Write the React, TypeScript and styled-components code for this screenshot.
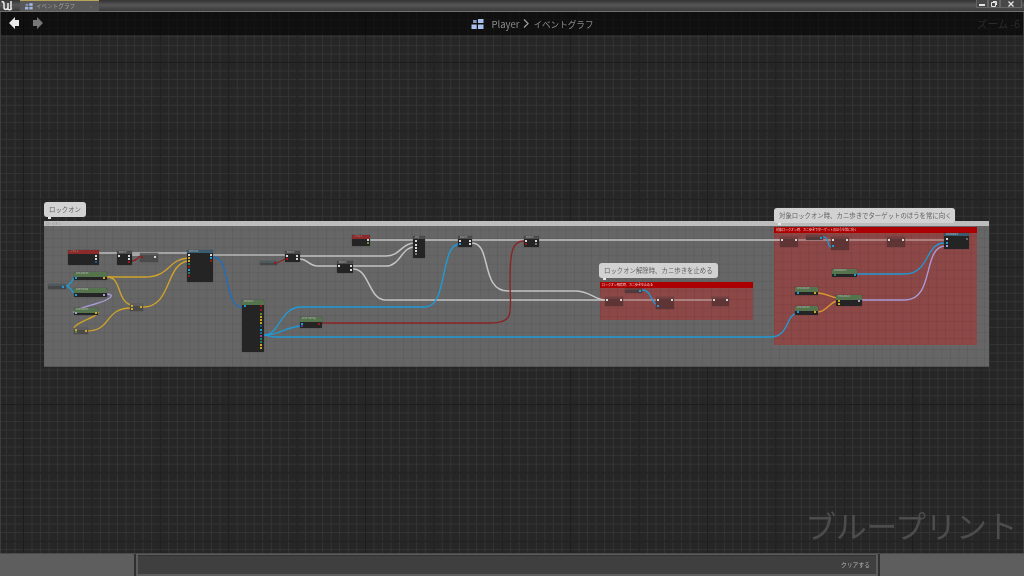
import styled, { createGlobalStyle } from "styled-components";

const GlobalStyle = createGlobalStyle`
  html, body {
    margin: 0;
    padding: 0;
    background: #252525;
    font-family: "Noto Sans CJK JP", "Liberation Sans", sans-serif;
    overflow: hidden;
  }
`;

const Page = styled.div`
  width: 1024px;
  height: 576px;
  display: flex;
  flex-flow: column;
  overflow: hidden;
  filter: blur(0.35px);
`;

const TitleBar = styled.div`
  height: 12px;
  flex: none;
  display: flex;
  align-items: flex-end;
  box-sizing: border-box;
  background: linear-gradient(#333333, #565656 45%, #3a3a3a);
  border-bottom: 1px solid #707070;
`;
const Logo = styled.svg`
  width: 14px;
  height: 11px;
  margin: 0 6px 0 0;
`;
const Tab = styled.div`
  width: 79px;
  height: 11px;
  display: flex;
  align-items: center;
  gap: 3px;
  padding-left: 5px;
  box-sizing: border-box;
  background: #585858;
  border-top: 1px solid #b8a458;
  color: #a0a0a0;
  font-size: 5.6px;
  line-height: 9px;
`;
const TabClose = styled.span`
  margin-left: auto;
  margin-right: 5px;
  color: #6c6c6c;
  font-size: 6px;
`;
const WindowButtons = styled.div`
  margin-left: auto;
  margin-right: 2px;
  height: 8px;
  display: flex;
  align-self: flex-start;
`;
const WindowButton = styled.div<{ $w: number }>`
  width: ${(p) => p.$w}px;
  height: 8px;
  display: flex;
  align-items: center;
  justify-content: center;
  background: #484848;
  border: 1px solid #666666;
  border-top: none;
  box-sizing: border-box;
`;

const Canvas = styled.div`
  flex: 1;
  position: relative;
  overflow: hidden;
  border-left: 1px solid #3c3c3c;
  border-right: 1px solid #3c3c3c;
  background-color: #262626;
  background-image:
    linear-gradient(#1c1c1c 1px, transparent 1px),
    linear-gradient(90deg, #1c1c1c 1px, transparent 1px),
    linear-gradient(#343434 1px, transparent 1px),
    linear-gradient(90deg, #343434 1px, transparent 1px);
  background-size: 68.4px 68.4px, 68.4px 68.4px, 8.55px 8.55px, 8.55px 8.55px;
  background-position: 22px 50px, 22px 50px, 22px 50px, 22px 50px;
`;

const BreadcrumbBar = styled.div`
  position: absolute;
  z-index: 5;
  left: 0;
  right: 0;
  top: 0;
  height: 23px;
  display: flex;
  align-items: center;
  justify-content: center;
  gap: 4px;
  background: rgba(0, 0, 0, 0.6);
  color: #8c8c8c;
  font-size: 9.5px;
  padding-left: 41px;
  box-sizing: border-box;
`;
const NavArrows = styled.div`
  position: absolute;
  left: 8px;
  top: 5px;
  display: flex;
  gap: 12px;
`;
const ZoomLabel = styled.div`
  position: absolute;
  right: 3px;
  top: 4px;
  color: #2c2c2c;
  font-size: 10.5px;
  line-height: 15px;
`;
const GraphIcon = styled.svg`
  width: 13px;
  height: 10px;
  margin-right: 3px;
`;
const Chevron = styled.svg`
  width: 6px;
  height: 9px;
`;
const GraphName = styled.span`
  font-size: 8.6px;
`;
const Watermark = styled.div`
  position: absolute;
  right: 6px;
  bottom: 8px;
  color: #4c4c4c;
  font-size: 31px;
  line-height: 40px;
  letter-spacing: -0.5px;
`;

const Comment = styled.div<{ $x: number; $y: number; $w: number; $h: number; $tone: "gray" | "red" }>`
  position: absolute;
  left: ${(p) => p.$x}px;
  top: ${(p) => p.$y}px;
  width: ${(p) => p.$w}px;
  height: ${(p) => p.$h}px;
  background: ${(p) => (p.$tone === "red" ? "#8c4747" : "#666666")};
  background-image:
    linear-gradient(rgba(0, 0, 0, 0.06) 1px, transparent 1px),
    linear-gradient(90deg, rgba(0, 0, 0, 0.06) 1px, transparent 1px);
  background-size: 8.55px 8.55px;
  ${(p) => p.$tone === "gray" && "box-shadow: inset 0 -1px 0 #555;"}
`;
const CommentHeader = styled.div<{ $tone: "gray" | "red" }>`
  height: ${(p) => (p.$tone === "red" ? 6 : 5)}px;
  padding-left: 2px;
  background: ${(p) => (p.$tone === "red" ? "#ac0000" : "#bdbdbd")};
  color: ${(p) => (p.$tone === "red" ? "#f0d0d0" : "#8a8a8a")};
  font-size: 3px;
  line-height: 6px;
  white-space: nowrap;
  overflow: hidden;
`;

const Bubble = styled.div<{ $x: number; $y: number; $w: number }>`
  position: absolute;
  z-index: 3;
  left: ${(p) => p.$x}px;
  top: ${(p) => p.$y}px;
  width: ${(p) => p.$w}px;
  height: 15px;
  box-sizing: border-box;
  padding-left: 5px;
  background: #d2d2d2;
  border-radius: 3px;
  color: #626262;
  font-size: 6.4px;
  line-height: 15px;
  white-space: nowrap;
  &::after {
    content: "";
    position: absolute;
    left: 4px;
    bottom: -2px;
    width: 3px;
    height: 2px;
    background: #e8e8e8;
  }
`;

const Wires = styled.svg`
  position: absolute;
  z-index: 1;
  left: 0;
  top: 0;
  width: 1024px;
  height: 541px;
`;
const Wire = styled.path<{ $color: string; $w?: number }>`
  fill: none;
  stroke: ${(p) => p.$color};
  stroke-width: ${(p) => p.$w ?? 1.35}px;
`;

type Kind = "black" | "green" | "blue" | "red" | "cyan" | "gray" | "slim" | "rose" | "roseSlim";

const headerColors: Record<Kind, string> = {
  black: "#4c4c4c",
  green: "#55734c",
  blue: "#3e5c78",
  red: "#8a2a2a",
  cyan: "#3a5c70",
  gray: "#5e5e5e",
  slim: "#4c5a60",
  rose: "#6d3f3f",
  roseSlim: "#6d3f3f",
};
const headerHeights: Record<Kind, number> = {
  black: 3,
  green: 5,
  blue: 3,
  red: 4,
  cyan: 3,
  gray: 2,
  slim: 2,
  rose: 2,
  roseSlim: 2,
};
const bodyColors: Record<Kind, string> = {
  black: "#242424",
  green: "#242424",
  blue: "#242424",
  red: "#242424",
  cyan: "#242424",
  gray: "#4b4b4b",
  slim: "#464646",
  rose: "#5f3434",
  roseSlim: "#533a3a",
};

const NodeBox = styled.div<{ $x: number; $y: number; $w: number; $h: number; $kind: Kind }>`
  position: absolute;
  z-index: 2;
  left: ${(p) => p.$x}px;
  top: ${(p) => p.$y}px;
  width: ${(p) => p.$w}px;
  height: ${(p) => p.$h}px;
  background: ${(p) => bodyColors[p.$kind]};
  border-radius: 1px;
  box-shadow: 0 0 1px #222;
  overflow: hidden;
`;
const NodeTitle = styled.div<{ $kind: Kind }>`
  height: ${(p) => headerHeights[p.$kind]}px;
  background: ${(p) => headerColors[p.$kind]};
  color: #b8b8b8;
  font-size: 2.2px;
  line-height: 3px;
  padding-left: 2px;
  white-space: nowrap;
  overflow: hidden;
`;
const Pin = styled.i<{ $x: number; $y: number; $c: string }>`
  position: absolute;
  left: ${(p) => p.$x}px;
  top: ${(p) => p.$y}px;
  width: 2px;
  height: 2px;
  background: ${(p) => p.$c};
`;

const BottomBar = styled.div`
  height: 23px;
  flex: none;
  display: flex;
  background: #5c5c5c;
  border-top: 1px solid #4a4a4a;
  box-sizing: border-box;
`;
const BottomSide = styled.div<{ $w: number }>`
  width: ${(p) => p.$w}px;
  flex: none;
  background: #5e5e5e;
`;
const Divider = styled.div`
  width: 2px;
  flex: none;
  background: #303030;
`;
const ClearPanel = styled.div`
  flex: 1;
  margin: 1px 2px 2px;
  padding-right: 6px;
  border-top: 1px solid #333;
  background: #3f3f3f;
  color: #b4b4b4;
  font-size: 5.8px;
  line-height: 18px;
  text-align: right;
`;

type PinDef = [number, number, string];
interface NodeDef {
  x: number;
  y: number;
  w: number;
  h: number;
  kind: Kind;
  title?: string;
  pins?: PinDef[];
}

const WHITE = "#d8d8d8";
const RED = "#9c1818";
const BLUE = "#1f9ad6";
const GOLD = "#d0a428";
const LAVENDER = "#a89cd4";

// y values are relative to the canvas, which starts 12px down the page
const nodes: NodeDef[] = [
  { x: 68, y: 238, w: 31, h: 15, kind: "red", title: "イベント", pins: [[27, 5, WHITE], [27, 8, WHITE], [27, 11, "#1a5a9a"]] },
  { x: 117, y: 239, w: 15, h: 14, kind: "black", title: "Branch", pins: [[1, 4, WHITE], [11, 4, WHITE], [11, 7, WHITE], [11, 10, RED]] },
  { x: 140, y: 241, w: 18, h: 9, kind: "gray", pins: [[1, 3, RED], [14, 3, WHITE]] },
  { x: 187, y: 238, w: 26, h: 32, kind: "cyan", title: "SetFocus", pins: [[1, 4, WHITE], [1, 7, GOLD], [1, 10, GOLD], [1, 13, "#2a7a6a"], [1, 16, RED], [1, 19, BLUE], [1, 22, "#2a7a6a"], [1, 25, RED], [23, 4, WHITE], [23, 7, BLUE], [23, 10, RED]] },
  { x: 48, y: 272, w: 18, h: 5, kind: "slim", pins: [[14, 2, BLUE]] },
  { x: 74, y: 260, w: 33, h: 8, kind: "green", title: "GetLocation", pins: [[1, 5, BLUE], [29, 5, GOLD]] },
  { x: 74, y: 276, w: 33, h: 9, kind: "green", title: "GetForward", pins: [[1, 6, BLUE], [29, 6, LAVENDER]] },
  { x: 74, y: 296, w: 24, h: 7, kind: "green", title: "GetRotation", pins: [[1, 4, LAVENDER], [21, 4, GOLD]] },
  { x: 130, y: 292, w: 13, h: 7, kind: "gray", pins: [[1, 1, GOLD], [1, 4, GOLD], [10, 2, GOLD]] },
  { x: 74, y: 316, w: 14, h: 6, kind: "gray", pins: [[1, 1, GOLD], [1, 3, "#5a8a30"], [11, 2, GOLD]] },
  {
    x: 242, y: 288, w: 22, h: 52, kind: "green", title: "Break Hit",
    pins: [[2, 5, BLUE], [18, 5, RED], [18, 9, RED], [18, 13, "#5a8a30"], [18, 16, GOLD], [18, 19, GOLD], [18, 22, GOLD], [18, 25, "#1a5a7a"], [18, 29, BLUE], [18, 32, "#1a6a8a"], [18, 35, "#a040a0"], [18, 38, "#1a8060"], [18, 41, "#1a8060"], [18, 44, GOLD], [18, 47, GOLD]],
  },
  { x: 260, y: 249, w: 17, h: 4, kind: "slim", pins: [[14, 1, RED]] },
  { x: 285, y: 239, w: 15, h: 11, kind: "black", title: "Branch", pins: [[1, 4, WHITE], [1, 7, RED], [11, 4, WHITE], [11, 7, WHITE]] },
  { x: 352, y: 223, w: 18, h: 11, kind: "red", title: "イベント", pins: [[15, 4, WHITE], [15, 7, "#5a9a30"]] },
  { x: 337, y: 249, w: 16, h: 12, kind: "black", title: "Branch", pins: [[1, 4, WHITE], [13, 4, WHITE], [13, 8, WHITE]] },
  { x: 413, y: 224, w: 12, h: 22, kind: "black", title: "Seq", pins: [[2, 4, WHITE], [2, 8, WHITE], [2, 11, WHITE], [2, 14, WHITE], [2, 17, "#777"]] },
  { x: 458, y: 224, w: 14, h: 11, kind: "black", title: "Branch", pins: [[1, 4, WHITE], [1, 7, BLUE], [11, 4, WHITE], [11, 7, WHITE]] },
  { x: 524, y: 224, w: 15, h: 11, kind: "black", title: "Branch", pins: [[1, 4, WHITE], [1, 7, RED], [11, 4, WHITE], [11, 7, "#777"]] },
  { x: 300, y: 305, w: 22, h: 11, kind: "green", title: "Actor Has Tag", pins: [[1, 6, BLUE], [1, 8, "#4a3a9a"], [18, 6, RED]] },
  { x: 605, y: 285, w: 18, h: 9, kind: "rose", pins: [[1, 2, WHITE], [15, 2, WHITE]] },
  { x: 625, y: 276, w: 17, h: 5, kind: "roseSlim", pins: [[14, 2, BLUE]] },
  { x: 656, y: 285, w: 18, h: 12, kind: "rose", pins: [[1, 2, WHITE], [1, 8, BLUE], [15, 2, WHITE]] },
  { x: 712, y: 285, w: 17, h: 9, kind: "rose", pins: [[1, 2, WHITE], [14, 2, WHITE]] },
  { x: 780, y: 225, w: 18, h: 10, kind: "rose", pins: [[1, 2, WHITE], [15, 2, WHITE]] },
  { x: 806, y: 223, w: 17, h: 5, kind: "roseSlim", pins: [[14, 2, BLUE]] },
  { x: 831, y: 225, w: 18, h: 13, kind: "rose", pins: [[1, 2, WHITE], [1, 8, BLUE], [15, 2, WHITE]] },
  { x: 887, y: 225, w: 18, h: 10, kind: "rose", pins: [[1, 2, WHITE], [15, 2, WHITE]] },
  { x: 944, y: 221, w: 25, h: 16, kind: "cyan", title: "SetRotation", pins: [[2, 5, WHITE], [2, 9, BLUE], [2, 12, LAVENDER], [22, 5, "#666"]] },
  { x: 832, y: 257, w: 25, h: 8, kind: "green", title: "GetRotation", pins: [[2, 5, "#1a8060"], [22, 5, BLUE]] },
  { x: 795, y: 275, w: 23, h: 8, kind: "green", title: "GetLocation", pins: [[2, 5, BLUE], [19, 5, GOLD]] },
  { x: 795, y: 294, w: 23, h: 9, kind: "green", title: "GetLocation", pins: [[2, 5, BLUE], [19, 5, GOLD]] },
  { x: 836, y: 283, w: 26, h: 11, kind: "green", title: "FindLookAt", pins: [[2, 5, GOLD], [2, 8, GOLD], [22, 5, LAVENDER]] },
];

const wires: { d: string; c: string; w?: number }[] = [
  // main exec lines
  { d: "M99 241 H117", c: "#b8b8b8", w: 1.6 },
  { d: "M132 243 H140", c: "#b8b8b8", w: 1.6 },
  { d: "M132 241 H187", c: "#b8b8b8", w: 1.6 },
  { d: "M213 243 H285", c: "#b8b8b8", w: 1.6 },
  { d: "M300 244 H386 C400 244 402 231 414 231", c: "#c4c4c4", w: 1.5 },
  { d: "M300 247 C308 247 308 254 318 254 H386 C400 254 402 235 414 235", c: "#c4c4c4", w: 1.5 },
  { d: "M353 257 C370 257 368 288 386 288 H605", c: "#c4c4c4", w: 1.5 },
  { d: "M370 228 H413", c: "#c4c4c4", w: 1.5 },
  { d: "M425 228 H458", c: "#c4c4c4", w: 1.5 },
  { d: "M472 228 H524", c: "#c4c4c4", w: 1.5 },
  { d: "M539 228 H780", c: "#c4c4c4", w: 1.5 },
  { d: "M472 231 C492 231 480 279 508 279 H575 C590 279 595 288 605 288", c: "#c4c4c4", w: 1.5 },
  { d: "M623 288 H656", c: "#d0bcbc", w: 1 },
  { d: "M674 288 H712", c: "#d0bcbc", w: 1 },
  { d: "M798 228 H831", c: "#d0bcbc", w: 1 },
  { d: "M849 228 H887", c: "#d0bcbc", w: 1 },
  { d: "M905 228 H944", c: "#d0bcbc", w: 1 },
  // red
  { d: "M132 249 C136 249 138 246 140 244", c: "#8e2020" },
  { d: "M277 251 L285 247", c: "#8e2020" },
  { d: "M322 311 H490 C516 311 510 300 510 270 C510 240 512 229 524 229", c: "#8a2424" },
  // dark blue
  { d: "M213 245 C232 245 222 296 244 296", c: "#1f6ec0", w: 1.4 },
  // blue from break hit
  { d: "M264 323 C280 323 280 295 301 295 H425 C448 295 440 233 459 232", c: BLUE },
  { d: "M264 323 C280 323 285 315 301 314", c: BLUE },
  { d: "M264 323 C268 323 270 325 275 325 H770 C790 325 786 302 796 302", c: BLUE },
  { d: "M66 274 C70 274 72 268 75 265", c: BLUE },
  { d: "M66 274 C70 274 72 280 75 282", c: BLUE },
  { d: "M642 278 C652 278 650 290 657 293", c: BLUE },
  { d: "M823 225 C830 225 826 234 832 236", c: BLUE },
  { d: "M857 262 H905 C930 262 925 230 945 231", c: BLUE, w: 1.4 },
  // gold
  { d: "M107 265 H145 C170 265 168 247 188 246", c: GOLD },
  { d: "M107 265 C122 265 116 288 131 293 H143", c: GOLD },
  { d: "M143 295 C172 295 165 252 188 249", c: GOLD },
  { d: "M98 300 C100 304 76 310 74 316", c: GOLD },
  { d: "M87 319 C112 319 104 296 131 296", c: GOLD },
  { d: "M818 281 C826 281 830 285 837 286", c: "#d89a30" },
  { d: "M818 300 C826 300 830 290 837 289", c: "#d89a30" },
  // lavender
  { d: "M107 282 C118 283 106 289 95 292 C84 295 69 300 75 301", c: LAVENDER },
  { d: "M862 288 H905 C935 288 922 235 945 234", c: LAVENDER, w: 1.4 },
];

const App = () => {
  return (
    <Page>
      <GlobalStyle />
      <TitleBar>
        <Logo viewBox="0 0 14 11">
          <path
            d="M1.5 1.5 C3.5 1.5 4 2.5 4 4 V7.5 C4 10 7.5 10 8 7.5 V3 M8 7.5 V8.5 C8 10 10 10.5 12 8.5 M11 1 V9"
            fill="none"
            stroke="#ececec"
            strokeWidth="1.5"
          />
        </Logo>
        <Tab>
          <svg width="8" height="7" viewBox="0 0 12 10">
            <rect x="0" y="5.5" width="5" height="4" fill="#9fb6e0" />
            <rect x="6.5" y="0" width="5" height="4" fill="#9fb6e0" />
            <rect x="6.5" y="5.5" width="5" height="4" fill="#9fb6e0" />
            <rect x="1" y="1" width="4" height="3" fill="#7f96c0" />
          </svg>
          イベントグラフ
          <TabClose>×</TabClose>
        </Tab>
        <WindowButtons>
          <WindowButton $w={12}>
            <svg width="6" height="5" viewBox="0 0 6 5">
              <rect x="0" y="3" width="6" height="2" fill="#e4e4e4" />
            </svg>
          </WindowButton>
          <WindowButton $w={12}>
            <svg width="6" height="6" viewBox="0 0 6 6">
              <path d="M0.5 1.5 H4.5 V5.5 H0.5 Z M2 0.5 H5.5 V4" fill="none" stroke="#e4e4e4" />
            </svg>
          </WindowButton>
          <WindowButton $w={22}>
            <svg width="6" height="6" viewBox="0 0 6 6">
              <path d="M0.5 0.5 L5.5 5.5 M5.5 0.5 L0.5 5.5" stroke="#e4e4e4" strokeWidth="1.3" />
            </svg>
          </WindowButton>
        </WindowButtons>
      </TitleBar>
      <Canvas>
        <BreadcrumbBar>
          <NavArrows>
            <svg width="11" height="12" viewBox="0 0 11 12">
              <path d="M0 6 L6 0 V3 H10 V9 H6 V12 Z" fill="#e8e8e8" />
            </svg>
            <svg width="11" height="12" viewBox="0 0 11 12">
              <path d="M11 6 L5 0 V3 H1 V9 H5 V12 Z" fill="#777" />
            </svg>
          </NavArrows>
          <GraphIcon viewBox="0 0 12 10">
            <rect x="0" y="5.5" width="5.2" height="4.5" fill="#a8c0ec" />
            <rect x="6.5" y="0" width="5.5" height="4" fill="#a8c0ec" />
            <rect x="6.5" y="5.5" width="5.5" height="4.5" fill="#a8c0ec" />
            <rect x="1.5" y="1" width="3.7" height="3" fill="#7f96c0" />
          </GraphIcon>
          Player
          <Chevron viewBox="0 0 6 9">
            <path d="M1 0.5 L5 4.5 L1 8.5" fill="none" stroke="#9a9a9a" strokeWidth="1.3" />
          </Chevron>
          <GraphName>イベントグラフ</GraphName>
          <ZoomLabel>ズーム -6</ZoomLabel>
        </BreadcrumbBar>

        <Comment $x={43} $y={209} $w={945} $h={146} $tone="gray">
          <CommentHeader $tone="gray">ロックオン</CommentHeader>
        </Comment>
        <Comment $x={599} $y={270} $w={153} $h={38} $tone="red">
          <CommentHeader $tone="red">ロックオン解除時、カニ歩きを止める</CommentHeader>
        </Comment>
        <Comment $x={773} $y={215} $w={203} $h={118} $tone="red">
          <CommentHeader $tone="red">対象ロックオン時、カニ歩きでターゲットのほうを常に向く</CommentHeader>
        </Comment>

        <Bubble $x={43} $y={190} $w={42}>ロックオン</Bubble>
        <Bubble $x={598} $y={251} $w={119}>ロックオン解除時、カニ歩きを止める</Bubble>
        <Bubble $x={773} $y={196} $w={181}>対象ロックオン時、カニ歩きでターゲットのほうを常に向く</Bubble>

        <Wires viewBox="1 0 1024 541">
          {wires.map((w) => (
            <Wire key={w.d} d={w.d} $color={w.c} $w={w.w} />
          ))}
        </Wires>

        {nodes.map((n) => (
          <NodeBox key={`${n.x}-${n.y}`} $x={n.x - 1} $y={n.y} $w={n.w} $h={n.h} $kind={n.kind}>
            <NodeTitle $kind={n.kind}>{n.title}</NodeTitle>
            {n.pins?.map((p) => (
              <Pin key={`${p[0]}-${p[1]}`} $x={p[0]} $y={p[1]} $c={p[2]} />
            ))}
          </NodeBox>
        ))}

        <Watermark>ブループリント</Watermark>
      </Canvas>
      <BottomBar>
        <BottomSide $w={134} />
        <Divider />
        <ClearPanel>クリアする</ClearPanel>
        <Divider />
        <BottomSide $w={144} />
      </BottomBar>
    </Page>
  );
};

export default App;
